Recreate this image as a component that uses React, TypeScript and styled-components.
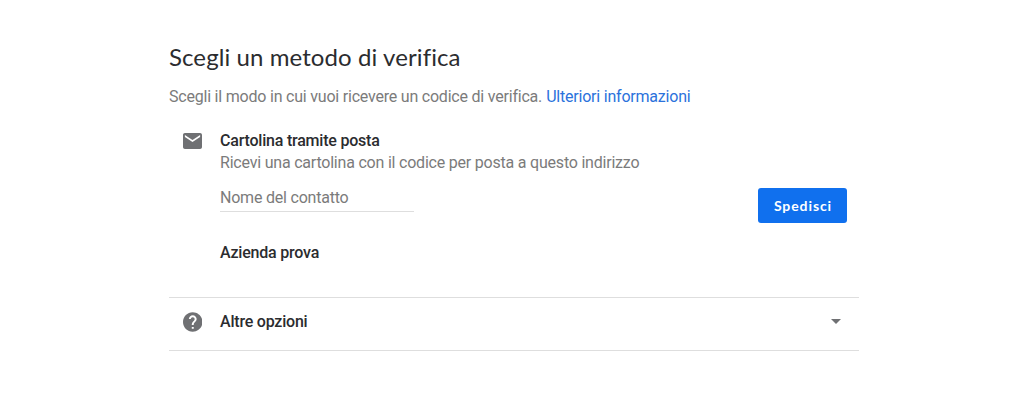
import React from 'react';
import styled, { createGlobalStyle } from 'styled-components';

const GlobalStyle = createGlobalStyle`
  * { box-sizing: border-box; }
  body { margin: 0; background: #fff; font-family: Roboto, "Liberation Sans", sans-serif; }
`;

const Page = styled.main`
  width: 690px;
  margin-left: 169px;
  padding-top: 41px;
  color: #2b2c2f;
  font-size: 16px;
  line-height: 22px;
  letter-spacing: -0.21px;
`;

const Title = styled.h1`
  margin: 0;
  font: 400 24px/32px Lato, sans-serif;
  font-variant-ligatures: none;
  letter-spacing: 0.09px;
  white-space: nowrap;
`;

const Intro = styled.p`
  display: flex;
  gap: 4px;
  margin: 13px 0 0;
  color: #7b7b7b;
  white-space: nowrap;
`;

const Link = styled.a`
  color: #2b72dc;
  text-decoration: none;
`;

const Method = styled.section`
  display: grid;
  grid-template-columns: 51px 1fr auto;
  height: 190px;
  padding: 22px 12px 0 0;
  border-bottom: 1px solid #dedede;
`;

const IconCell = styled.div`
  padding-left: 13.5px;
`;

const Details = styled.div`
  display: flex;
  flex-direction: column;
`;

const Label = styled.strong`
  font-weight: 500;
`;

const Description = styled.span`
  color: #7b7b7b;
  white-space: nowrap;
`;

const Input = styled.input`
  width: 194px;
  height: 29px;
  margin: 9px 0 30px;
  padding: 0;
  border: 0;
  border-bottom: 1px solid #dedede;
  background: transparent;
  font: inherit;
  letter-spacing: inherit;
  outline: none;
  &::placeholder { color: #7b7b7b; opacity: 1; }
`;

const Button = styled.button`
  width: 89px;
  height: 35px;
  margin-top: 58px;
  padding: 0 0 1px;
  border: 0;
  border-radius: 3px;
  background: #1070ee;
  color: #fff;
  font: 700 14px Lato, sans-serif;
  letter-spacing: 0.9px;
  text-indent: 1px;
`;

const Options = styled.section`
  display: grid;
  grid-template-columns: 51px 1fr auto;
  align-items: center;
  height: 53px;
  padding: 0 18px 5px 0;
  border-bottom: 1px solid #dedede;
`;

const Icon = styled.svg`
  display: block;
  fill: #6f7073;
`;

const MailIcon = styled(Icon)`
  margin-top: 3px;
`;

export default function App() {
  return (
    <>
      <GlobalStyle />
      <Page>
        <Title>Scegli un metodo di verifica</Title>
        <Intro>
          <span>Scegli il modo in cui vuoi ricevere un codice di verifica.</span>
          <Link>Ulteriori informazioni</Link>
        </Intro>
        <Method>
          <IconCell>
            <MailIcon width="19" height="16" viewBox="2 4 20 16" preserveAspectRatio="none">
              <path d="M20 4H4c-1.1 0-2 .9-2 2v12c0 1.1.9 2 2 2h16c1.1 0 2-.9 2-2V6c0-1.1-.9-2-2-2zm0 4-8 5-8-5V6l8 5 8-5v2z" />
            </MailIcon>
          </IconCell>
          <Details>
            <Label>Cartolina tramite posta</Label>
            <Description>Ricevi una cartolina con il codice per posta a questo indirizzo</Description>
            <Input placeholder="Nome del contatto" />
            <Label>Azienda prova</Label>
          </Details>
          <Button>Spedisci</Button>
        </Method>
        <Options>
          <IconCell>
            <Icon width="19.5" height="20" viewBox="2 2 20 20">
              <path d="M12 2C6.48 2 2 6.48 2 12s4.48 10 10 10 10-4.48 10-10S17.52 2 12 2zm1 17h-2v-2h2v2zm2.07-7.75-.9.92C13.45 12.9 13 13.5 13 15h-2v-.5c0-1.1.45-2.1 1.17-2.83l1.24-1.26c.37-.36.59-.86.59-1.41 0-1.1-.9-2-2-2s-2 .9-2 2H8c0-2.21 1.79-4 4-4s4 1.79 4 4c0 .88-.36 1.68-.93 2.25z" />
            </Icon>
          </IconCell>
          <Label>Altre opzioni</Label>
          <Icon width="10" height="5" viewBox="0 0 10 5"><path d="M0 0h10L5 5z" /></Icon>
        </Options>
      </Page>
    </>
  );
}
